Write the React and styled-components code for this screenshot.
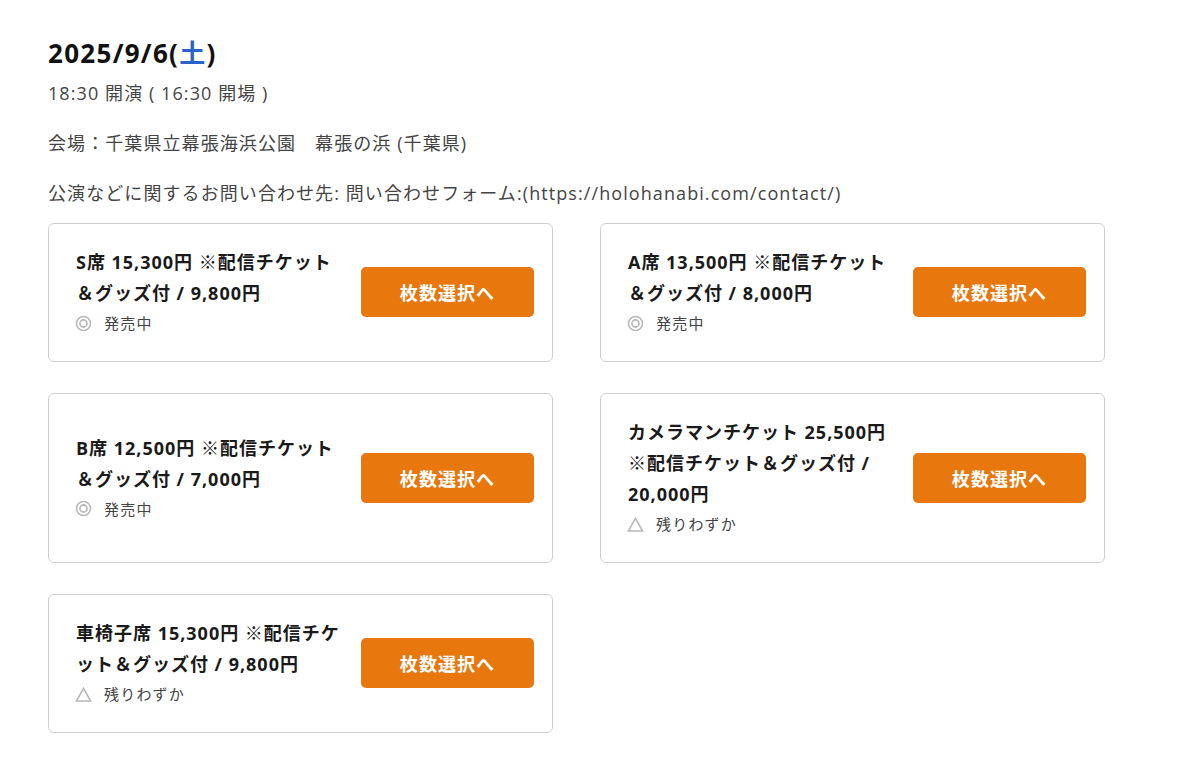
import React from "react";
import styled, { createGlobalStyle } from "styled-components";

const Global = createGlobalStyle`
  html, body { margin: 0; padding: 0; background: #fff; }
  body {
    font-family: "Open Sans", "Noto Sans CJK JP", sans-serif;
    color: #222;
  }
`;

const Page = styled.div`
  padding: 35px 0 40px 48px;
  width: 1057px;
`;

const DateTitle = styled.h2`
  margin: 0;
  font-size: 26px;
  font-weight: 700;
  line-height: 36px;
  color: #111;
  letter-spacing: 0.05em;
`;

const Sat = styled.span`
  color: #2864c8;
`;

const Info = styled.p`
  margin: ${(p) => p.$mt || 0}px 0 0;
  font-size: 18px;
  line-height: 28px;
  color: #444;
  letter-spacing: 0.06em;
`;

const Grid = styled.div`
  margin-top: 16px;
  display: grid;
  grid-template-columns: 505px 505px;
  column-gap: 47px;
  row-gap: 31px;
`;

const Card = styled.div`
  box-sizing: border-box;
  border: 1px solid #cfcfcf;
  border-radius: 6px;
  padding: 23px 18px 24px 27px;
  display: flex;
  align-items: center;
`;

const TextCol = styled.div`
  flex: 1;
  min-width: 0;
`;

const TicketName = styled.div`
  font-size: 18px;
  font-weight: 700;
  line-height: 31px;
  color: #1a1a1a;
  letter-spacing: 0.055em;
`;

const Status = styled.div`
  display: flex;
  align-items: center;
  gap: 12px;
  font-size: 15px;
  line-height: 28px;
  color: #444;
  letter-spacing: 0.08em;
`;

const IconBox = styled.svg`
  flex: none;
  width: 17px;
  height: 17px;
  margin-left: -1px;
`;

const SelectButton = styled.button`
  flex: none;
  margin-left: 16px;
  width: 173px;
  height: 50px;
  border: none;
  border-radius: 5px;
  background: #e8780e;
  color: #fff;
  font-family: inherit;
  font-size: 18px;
  font-weight: 700;
  letter-spacing: 0.06em;
  cursor: pointer;
`;

function StatusIcon({ kind }) {
  if (kind === "on") {
    return (
      <IconBox viewBox="0 0 17 17" aria-hidden="true">
        <circle cx="8.5" cy="8.5" r="7" fill="none" stroke="#b8b8b8" strokeWidth="1.6" />
        <circle cx="8.5" cy="8.5" r="3.6" fill="none" stroke="#b8b8b8" strokeWidth="1.6" />
      </IconBox>
    );
  }
  return (
    <IconBox viewBox="0 0 17 17" aria-hidden="true">
      <path d="M8.5 2.4 L15.6 15 H1.4 Z" fill="none" stroke="#b8b8b8" strokeWidth="1.6" />
    </IconBox>
  );
}

const tickets = [
  { name: "S席 15,300円 ※配信チケット＆グッズ付 / 9,800円", status: "on" },
  { name: "A席 13,500円 ※配信チケット＆グッズ付 / 8,000円", status: "on" },
  { name: "B席 12,500円 ※配信チケット＆グッズ付 / 7,000円", status: "on" },
  { name: "カメラマンチケット 25,500円 ※配信チケット＆グッズ付 / 20,000円", status: "few" },
  { name: "車椅子席 15,300円 ※配信チケット＆グッズ付 / 9,800円", status: "few" },
];

export default function App() {
  return (
    <>
      <Global />
      <Page>
        <DateTitle>
          2025/9/6(<Sat>土</Sat>)
        </DateTitle>
        <Info $mt={8}>18:30 開演 ( 16:30 開場 )</Info>
        <Info $mt={22}>会場：千葉県立幕張海浜公園　幕張の浜 (千葉県)</Info>
        <Info $mt={22}>公演などに関するお問い合わせ先: 問い合わせフォーム:(https://holohanabi.com/contact/)</Info>
        <Grid>
          {tickets.map((t, i) => (
            <Card key={i}>
              <TextCol>
                <TicketName>{t.name}</TicketName>
                <Status>
                  <StatusIcon kind={t.status} />
                  {t.status === "on" ? "発売中" : "残りわずか"}
                </Status>
              </TextCol>
              <SelectButton>枚数選択へ</SelectButton>
            </Card>
          ))}
        </Grid>
      </Page>
    </>
  );
}
